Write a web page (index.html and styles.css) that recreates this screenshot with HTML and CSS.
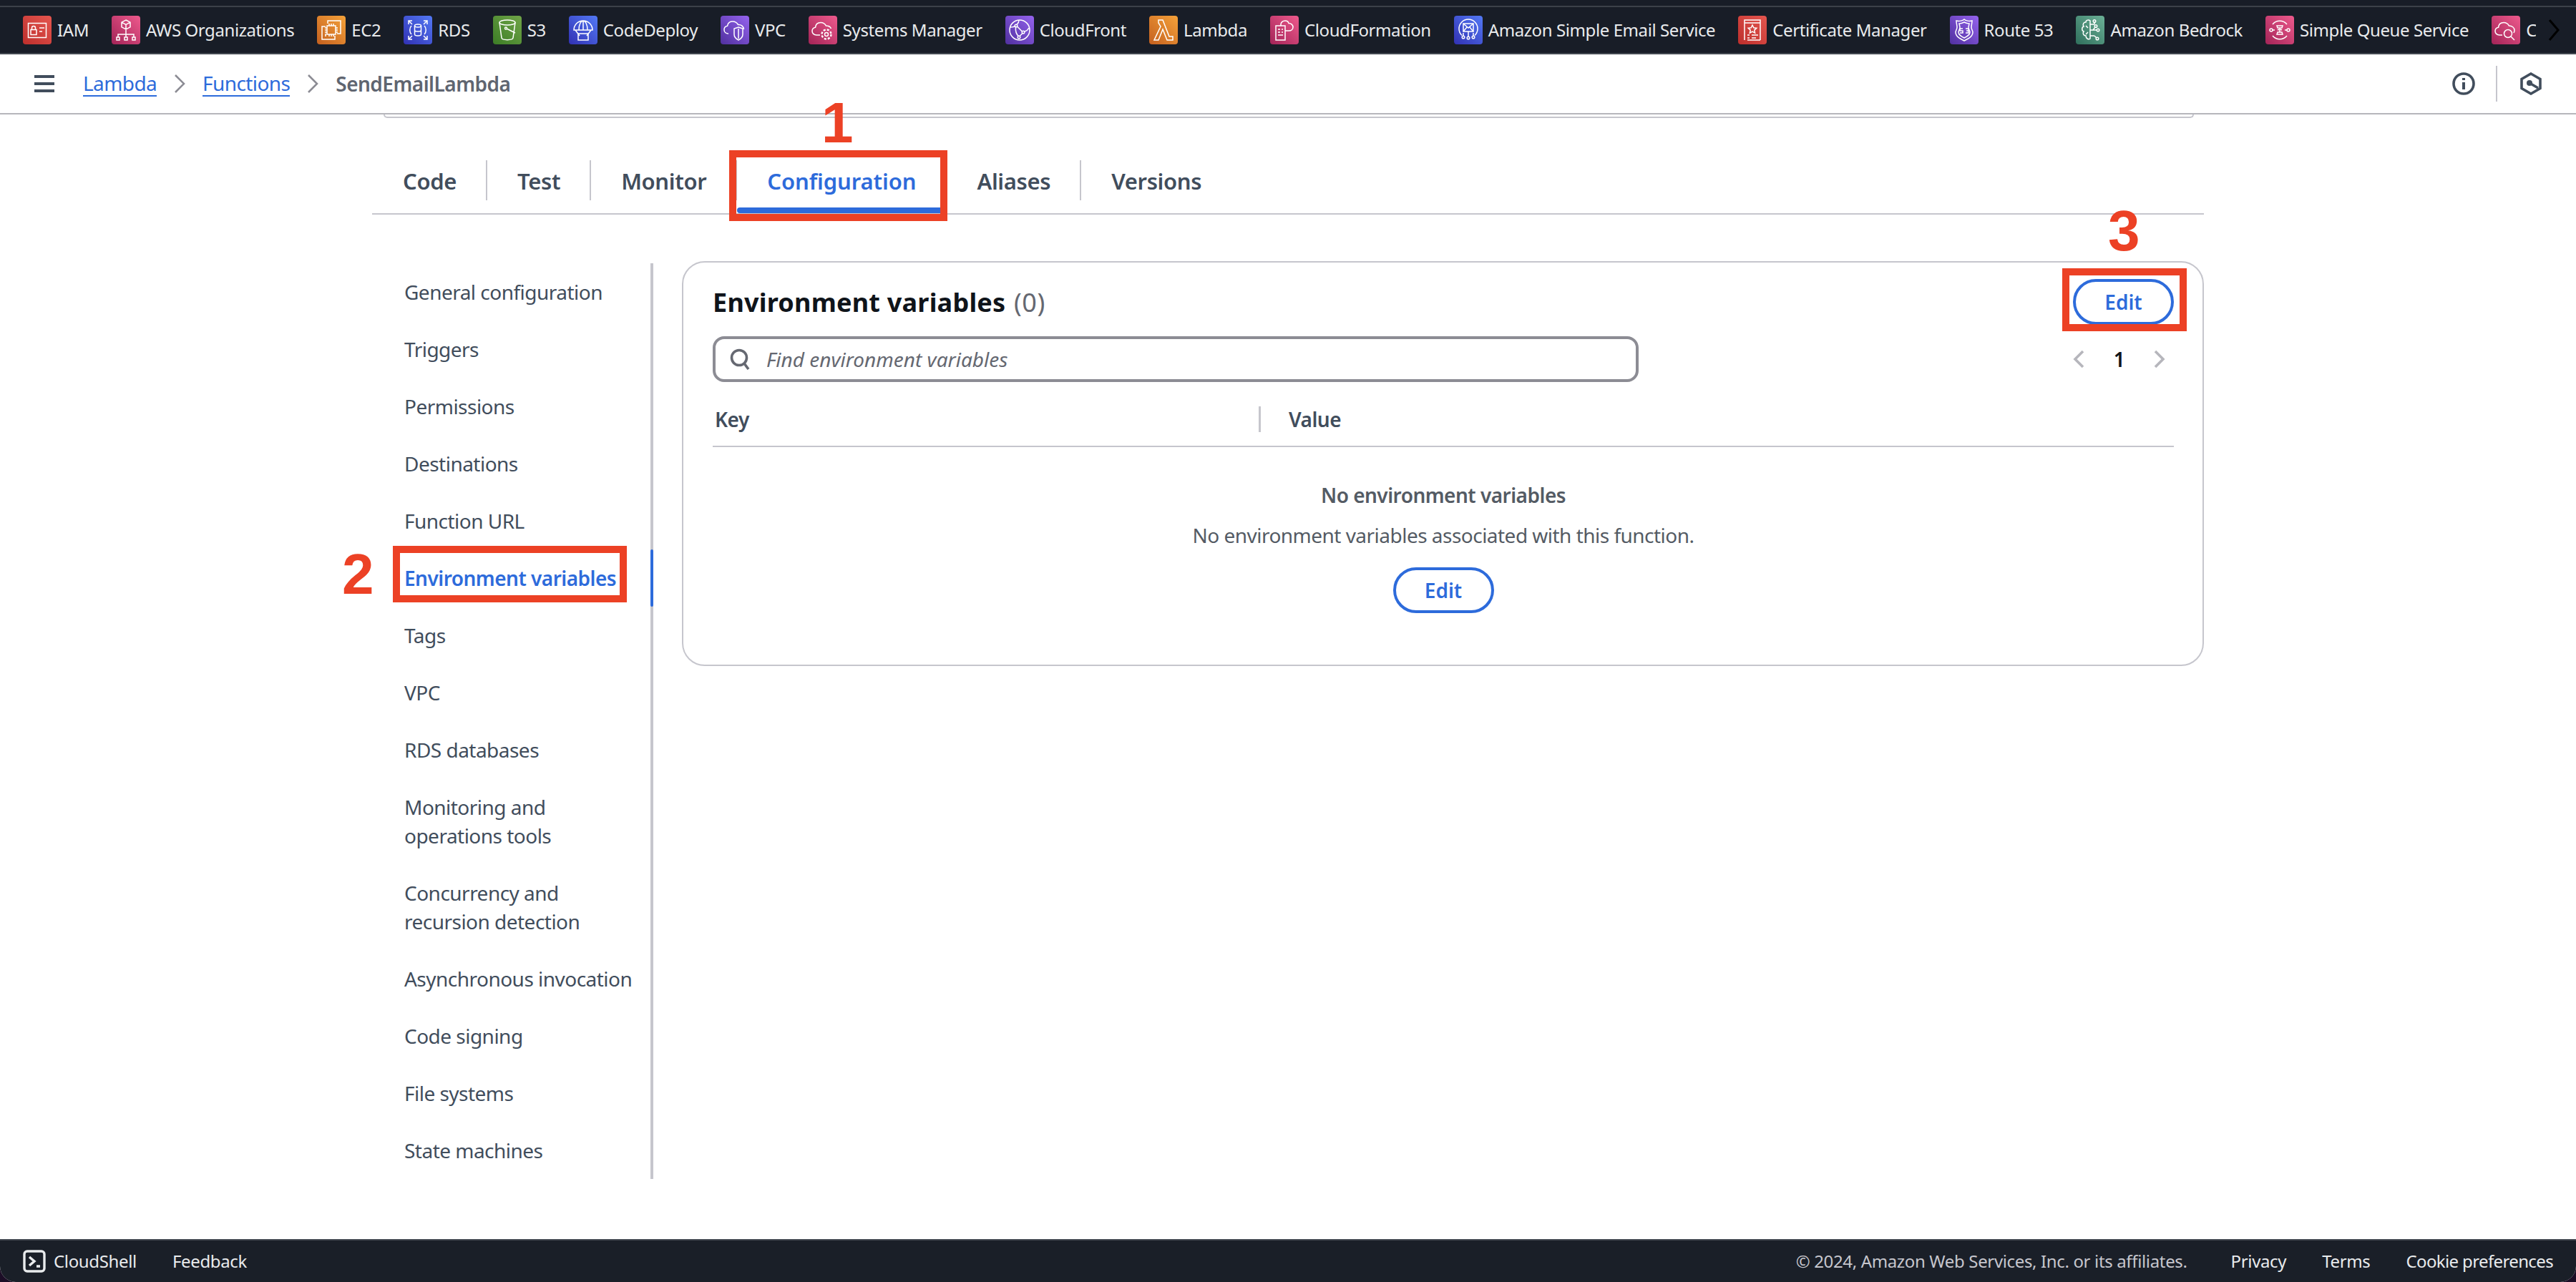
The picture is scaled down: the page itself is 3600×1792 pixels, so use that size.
FILE: index.html
```html
<!DOCTYPE html>
<html lang="en">
<head>
<meta charset="utf-8">
<title>SendEmailLambda - Lambda</title>
<link rel="stylesheet" href="styles.css">
</head>
<body>
<svg class="defs" width="0" height="0" aria-hidden="true">
  <symbol id="i-iam" viewBox="0 0 40 40"><rect x="7.5" y="10.5" width="25" height="20"/><rect x="11" y="19.5" width="8" height="7"/><path d="M12.5 19.5v-2.5a2.5 2.5 0 0 1 5 0v2.500M23 17h7M23 22h4"/></symbol>
  <symbol id="i-org" viewBox="0 0 40 40"><path d="M20 6l6 3.200v6.600l-6 3.200-6-3.200V9.200zM14 9.200l6 3.200 6-3.200M20 12.400V19M20 19v7M9 30v-4h22v4M20 26v4"/><rect x="7" y="30" width="4" height="4"/><rect x="18" y="30" width="4" height="4"/><rect x="29" y="30" width="4" height="4"/></symbol>
  <symbol id="i-ec2" viewBox="0 0 40 40"><path d="M15 11V7h18v18h-5M12 29v-4M12 15H7v18h18v-5"/><rect x="14" y="14" width="12" height="12"/><path d="M17 11v3M20 11v3M23 11v3M17 26v3M20 26v3M23 26v3M11 17h3M11 20h3M11 23h3M26 17h3M26 20h3M26 23h3"/></symbol>
  <symbol id="i-rds" viewBox="0 0 40 40"><ellipse cx="20" cy="14" rx="4.500" ry="2"/><path d="M15.500 14v12c0 2.600 9 2.600 9 0V14M15.500 20c0 2.600 9 2.600 9 0M7 12V7h5M33 12V7h-5M7 28v5h5M33 28v5h-5M7 7l5 5M33 7l-5 5M7 33l5-5M33 33l-5-5M11 14c-3 3-3 9 0 12M29 14c3 3 3 9 0 12"/></symbol>
  <symbol id="i-s3" viewBox="0 0 40 40"><ellipse cx="20" cy="9.500" rx="11" ry="3.500"/><path d="M9 9.500l3 21.500c.5 3.500 15.500 3.500 16 0l3-21.500M19 18l12 6"/><circle cx="18" cy="17.500" r="1.500"/></symbol>
  <symbol id="i-deploy" viewBox="0 0 40 40"><path d="M7 20a13 13 0 0 1 26 0zM14 20c0-8 3-13 6-13s6 5 6 13M20 7v13M9 20l6 8M31 20l-6 8"/><rect x="13" y="25" width="14" height="9"/></symbol>
  <symbol id="i-vpc" viewBox="0 0 40 40"><path d="M11 25c-3.500 0-6-2.200-6-5.500 0-2.800 2-4.800 4.500-5.200C10 10.500 13 8 17 8c3.500 0 6 2 7.500 4.500 4-.5 7.500 2 8 6.500"/><path d="M25 16l6 2v8c0 4-3 6.500-6 8-3-1.500-6-4-6-8v-8zM25 18v14"/></symbol>
  <symbol id="i-ssm" viewBox="0 0 40 40"><path d="M16 27h-5c-3.500 0-6-2.500-6-5.500 0-2.800 2-4.800 4.500-5.200C10 12 13 9.500 17 9.500c3.500 0 6 2 7.500 4.500 3.500 0 6 1.500 7 4"/><circle cx="25" cy="26" r="2.500"/><circle cx="25" cy="26" r="6.500" stroke-dasharray="3 2.100" stroke-width="2.400"/></symbol>
  <symbol id="i-cf" viewBox="0 0 40 40"><circle cx="20" cy="20" r="14"/><circle cx="15" cy="14" r="1.800"/><circle cx="25" cy="23" r="1.800"/><circle cx="19" cy="30" r="1.800"/><path d="M16.500 15l7 7M24 24.500l-4 4M14.500 16c-.5 5 1 10 4 12.500M7 16c4 0 6-1 7-2M16 12.500c2-2 3-5 3-6.500M27 22c3-1 5-3 6-5"/></symbol>
  <symbol id="i-lambda" viewBox="0 0 40 40"><path d="M13 6h6l9 23h5v5h-8l-6-15-6 15H7l9-19-3-5z"/></symbol>
  <symbol id="i-cfn" viewBox="0 0 40 40"><rect x="8" y="14" width="13" height="20"/><path d="M11 19h3M11 23h3M11 27h7M16 19h2M16 23h2M15 14v-2c0-3 3-5 6-5 2.500 0 4.500 1.500 5 3.500 3.500 0 6 2.500 6 5.500s-2.500 5-6 5h-5"/></symbol>
  <symbol id="i-ses" viewBox="0 0 40 40"><path d="M11 27.500a13 13 0 1 1 18 0"/><rect x="13" y="11" width="14" height="11"/><path d="M13 11l7 6 7-6M13 22l5-6M27 22l-5-6M20 22v7M13 24v4M27 24v4"/><circle cx="13" cy="30" r="1.800"/><circle cx="20" cy="31" r="1.800"/><circle cx="27" cy="30" r="1.800"/></symbol>
  <symbol id="i-acm" viewBox="0 0 40 40"><path d="M9 34V6h22v28M9 10h22M13 34h18"/><path d="M20 13l1.800 3.800 4 .5-3 2.800.8 4-3.600-2-3.600 2 .8-4-3-2.800 4-.5z"/><path d="M13 27h3M19 27h9M13 31h3M19 31h6"/></symbol>
  <symbol id="i-r53" viewBox="0 0 40 40"><path d="M20 5c2 2 7 3 11 2 0 4-1 6-1 9s2 5 2 7c0 6-6 9-12 12-6-3-12-6-12-12 0-2 2-4 2-7s-1-5-1-9c4 1 9 0 11-2z"/><path d="M20 9c2 1 4 2 7 2l-1 5c0 3 2 5 2 7 0 4-4 6-8 8-4-2-8-4-8-8 0-2 2-4 2-7l-1-5c3 0 5-1 7-2z"/><path d="M18 18h-4v3h4v3h-4M22 18h4v6h-4M23 21h3"/></symbol>
  <symbol id="i-br" viewBox="0 0 40 40"><path d="M20 7c-2-2-6-1-6 2-3 0-5 3-3 6-3 1-3 6 0 7-2 3 0 6 3 6 0 4 4 6 6 4zM20 12h6M20 20h4M20 28h6M26 12v-3M24 20l3-4M26 28l3 3"/><circle cx="26" cy="7.500" r="1.800"/><circle cx="28" cy="14.500" r="1.800"/><circle cx="31" cy="20" r="1.800"/><path d="M24 20h5"/><circle cx="30" cy="32" r="1.800"/><path d="M14 14l3 3M14 26l3-3"/></symbol>
  <symbol id="i-sqs" viewBox="0 0 40 40"><path d="M10 12a13 13 0 0 1 20 0M10 28a13 13 0 0 0 20 0"/><circle cx="8" cy="20" r="2"/><circle cx="32" cy="20" r="2"/><path d="M16 14h8l-1 3h-6zM16 26h8l-1-3h-6zM20 17v6M13 20h-3M27 20h3M17 20l2-1M23 20l-2-1"/></symbol>
  <symbol id="i-cw" viewBox="0 0 40 40"><path d="M15 27h-4c-3.500 0-6-2.500-6-5.500 0-2.800 2-4.800 4.500-5.200C10 12 13 9.500 17 9.500c3.500 0 6 2 7.500 4.500 4 0 7.500 2.500 7.500 6.500 0 1.500-.5 2.500-1 3.500"/><circle cx="23" cy="25" r="5.500"/><path d="M27 29l5 5"/></symbol>
</svg>

<div class="page">
  <header class="topbar">
    <div class="topbar-row">
      <nav class="services">
        <a class="svc"><span class="ico red"><svg><use href="#i-iam"/></svg></span>IAM</a>
        <a class="svc"><span class="ico pink"><svg><use href="#i-org"/></svg></span>AWS Organizations</a>
        <a class="svc"><span class="ico orange"><svg><use href="#i-ec2"/></svg></span>EC2</a>
        <a class="svc"><span class="ico blue"><svg><use href="#i-rds"/></svg></span>RDS</a>
        <a class="svc"><span class="ico green"><svg><use href="#i-s3"/></svg></span>S3</a>
        <a class="svc"><span class="ico blue"><svg><use href="#i-deploy"/></svg></span>CodeDeploy</a>
        <a class="svc"><span class="ico purple"><svg><use href="#i-vpc"/></svg></span>VPC</a>
        <a class="svc"><span class="ico pink"><svg><use href="#i-ssm"/></svg></span>Systems Manager</a>
        <a class="svc"><span class="ico purple"><svg><use href="#i-cf"/></svg></span>CloudFront</a>
        <a class="svc"><span class="ico orange"><svg><use href="#i-lambda"/></svg></span>Lambda</a>
        <a class="svc"><span class="ico pink"><svg><use href="#i-cfn"/></svg></span>CloudFormation</a>
        <a class="svc"><span class="ico blue"><svg><use href="#i-ses"/></svg></span>Amazon Simple Email Service</a>
        <a class="svc"><span class="ico red"><svg><use href="#i-acm"/></svg></span>Certificate Manager</a>
        <a class="svc"><span class="ico purple"><svg><use href="#i-r53"/></svg></span>Route 53</a>
        <a class="svc"><span class="ico teal"><svg><use href="#i-br"/></svg></span>Amazon Bedrock</a>
        <a class="svc"><span class="ico pink"><svg><use href="#i-sqs"/></svg></span>Simple Queue Service</a>
        <a class="svc"><span class="ico pink"><svg><use href="#i-cw"/></svg></span>C</a>
      </nav>
      <svg class="more" viewBox="0 0 16 32"><path d="M2 2l12 14L2 30"/></svg>
    </div>
  </header>

  <div class="crumbbar">
    <span class="burger"><i></i><i></i><i></i></span>
    <a class="crumb">Lambda</a>
    <svg class="sep" viewBox="0 0 16 26"><path d="M2 1l12 12L2 25"/></svg>
    <a class="crumb">Functions</a>
    <svg class="sep" viewBox="0 0 16 26"><path d="M2 1l12 12L2 25"/></svg>
    <span class="crumb-current">SendEmailLambda</span>
    <div class="crumb-tools">
      <svg class="tool" viewBox="0 0 32 32"><circle cx="16" cy="16" r="14"/><path class="tool-i" d="M16 14v10M16 8v3"/></svg>
      <span class="tool-div"></span>
      <svg class="tool" viewBox="0 0 32 32"><path d="M16 2l13 7.500v13L16 30 3 22.500v-13z"/><circle class="tool-dot" cx="14" cy="15" r="4"/><path d="M14 15l12 7"/></svg>
    </div>
  </div>

  <main class="main">
    <div class="prev-card"></div>

    <div class="tabs">
      <a class="tab">Code</a>
      <a class="tab">Test</a>
      <a class="tab">Monitor</a>
      <a class="tab active">Configuration</a>
      <a class="tab">Aliases</a>
      <a class="tab last">Versions</a>
    </div>

    <div class="config">
      <ul class="side">
        <li>General configuration</li>
        <li>Triggers</li>
        <li>Permissions</li>
        <li>Destinations</li>
        <li>Function URL</li>
        <li class="current">Environment variables</li>
        <li>Tags</li>
        <li>VPC</li>
        <li>RDS databases</li>
        <li>Monitoring and<br>operations tools</li>
        <li>Concurrency and<br>recursion detection</li>
        <li>Asynchronous invocation</li>
        <li>Code signing</li>
        <li>File systems</li>
        <li>State machines</li>
      </ul>

      <section class="card">
        <div class="card-head">
          <h2 class="card-title">Environment variables <span class="count">(0)</span></h2>
          <button class="btn">Edit</button>
        </div>
        <div class="filter-row">
          <div class="search">
            <svg class="search-ico" viewBox="0 0 30 30"><circle cx="13" cy="13" r="10.500"/><path d="M20 21l6 8"/></svg>
            <span class="placeholder">Find environment variables</span>
          </div>
          <div class="pager">
            <svg class="pg-chev" viewBox="0 0 16 26"><path d="M14 2L3 13l11 11"/></svg>
            <span class="pg-num">1</span>
            <svg class="pg-chev" viewBox="0 0 16 26"><path d="M2 2l11 11L2 24"/></svg>
          </div>
        </div>
        <div class="table-head">
          <div class="th th-key">Key</div>
          <div class="th th-val">Value</div>
        </div>
        <div class="empty">
          <div class="empty-title">No environment variables</div>
          <div class="empty-sub">No environment variables associated with this function.</div>
          <button class="btn">Edit</button>
        </div>
      </section>
    </div>
  </main>

  <footer class="footer">
    <a class="foot-shell">
      <svg class="shell-ico" viewBox="0 0 32 32"><rect x="2" y="2" width="28" height="28" rx="4"/><path d="M9 10l7 6-7 6M19 23h5"/></svg>
      CloudShell
    </a>
    <a class="foot-link feedback">Feedback</a>
    <span class="copyright">© 2024, Amazon Web Services, Inc. or its affiliates.</span>
    <a class="foot-link">Privacy</a>
    <a class="foot-link">Terms</a>
    <a class="foot-link cookie">Cookie preferences</a>
  </footer>

  <div class="mark mark-tab"></div>
  <div class="mark mark-nav"></div>
  <div class="mark mark-edit"></div>
  <span class="step step-1">1</span>
  <span class="step step-2">2</span>
  <span class="step step-3">3</span>
</div>
</body>
</html>
```

FILE: styles.css
```css
* { box-sizing: border-box; }
html, body { margin: 0; padding: 0; background: #1c0d26; }
body { font-family: "Noto Sans", "Open Sans", sans-serif; font-size: 28px; line-height: 40px; color: #414d5c; letter-spacing: -0.52px; }
.defs { position: absolute; }
a { color: inherit; text-decoration: none; }

.page { position: relative; width: 3600px; height: 1792px; display: flex; flex-direction: column; overflow: hidden; background: #fff; border-radius: 0 0 22px 22px; }

/* top service bar */
.topbar { height: 76px; flex: none; padding-top: 8px; background: #181d27; border-bottom: 2px solid #434851; }
.topbar-row { height: 66px; border-top: 2px solid #3c4149; display: flex; align-items: center; }
.services { flex: none; width: 3544px; padding-left: 32px; display: flex; gap: 32px; align-items: center; overflow: hidden; }
.svc { flex: none; display: flex; align-items: center; gap: 8px; color: #e9ebed; font-size: 24px; letter-spacing: -0.41px; line-height: 40px; white-space: nowrap; }
.ico { flex: none; width: 40px; height: 40px; border-radius: 4px; display: block; }
.ico svg { display: block; width: 40px; height: 40px; fill: none; stroke: #fff; stroke-width: 1.5; }
.red { background: linear-gradient(45deg, #bd2f2c, #e5564f); }
.pink { background: linear-gradient(45deg, #a32457, #ee5a8d); }
.orange { background: linear-gradient(45deg, #c4601f, #f5a23a); }
.blue { background: linear-gradient(45deg, #3131b3, #5379f5); }
.green { background: linear-gradient(45deg, #3c7d26, #70a548); }
.purple { background: linear-gradient(45deg, #50309f, #9563ee); }
.teal { background: linear-gradient(45deg, #2f6f5c, #6bb096); }
.more { width: 16px; height: 32px; margin-left: 17px; fill: none; stroke: #000; stroke-width: 3; flex: none; }

/* breadcrumbs */
.crumbbar { height: 84px; flex: none; display: flex; align-items: center; padding-left: 48px; border-bottom: 2px solid #b6b6bc; background: #fff; }
.burger { width: 28px; display: flex; flex-direction: column; gap: 6px; margin-right: 40px; }
.burger i { display: block; height: 4px; background: #414d5c; }
.crumb { color: #2d6bdb; font-size: 28px; letter-spacing: -0.6px; border-bottom: 2px solid #2d6bdb; line-height: 34px; }
.sep { width: 16px; height: 26px; margin: 0 24px; fill: none; stroke: #8c8c94; stroke-width: 2.6; flex: none; }
.crumb-current { color: #5f6570; font-size: 28px; font-weight: 600; }
.crumb-tools { margin-left: auto; display: flex; align-items: center; padding-right: 47px; }
.tool { width: 32px; height: 32px; fill: none; stroke: #414d5c; stroke-width: 3.6; flex: none; }
.tool-i { stroke-width: 4; }
.tool-dot { fill: #414d5c; stroke: none; }
.tool-div { width: 2px; height: 50px; background: #c6c6cd; margin: 0 31px 0 29px; }

/* main */
.main { flex: 1; min-height: 0; background: #fff; overflow: hidden; }
.prev-card { height: 5px; margin: 0 534px 0 536px; border: 2px solid #c6c6cd; border-top: 0; border-radius: 0 0 24px 24px; }
.tabs { margin: 59px 520px 0 520px; padding: 0 0 18px 1px; display: flex; border-bottom: 2px solid #c6c6cd; }
.tab { position: relative; height: 56px; line-height: 58px; padding: 0 41px 0 42px; font-size: 31px; letter-spacing: -0.35px; font-weight: 600; color: #414d5c; border-right: 2px solid #c6c6cd; white-space: nowrap; }
.tab.last { border-right: 0; }
.tab.active { color: #2d6bdb; letter-spacing: -0.1px; }
.tab.active::after { content: ""; position: absolute; left: 0; right: 0; bottom: -18px; height: 8px; border-radius: 4px; background: #2d6bdb; }

.config { display: flex; margin: 65px 520px 0 520px; align-items: flex-start; }
.side { list-style: none; margin: 3px 40px 0 0; padding: 0 0 0 45px; width: 393px; flex: none; border-right: 4px solid #c6c6cd; }
.side li { position: relative; padding: 20px 0; line-height: 40px; font-size: 28px; color: #414d5c; white-space: nowrap; }
.side li.current { color: #2d6bdb; font-weight: 600; }
.side li.current::after { content: ""; position: absolute; right: -4px; top: 0; bottom: 0; width: 4px; background: #2d6bdb; border-radius: 2px; }

.card { flex: 1; min-width: 0; padding: 23px 40px 72px 41px; border: 2px solid #c6c6cd; border-radius: 32px; background: #fff; }
.card-head { display: flex; justify-content: space-between; align-items: center; height: 64px; }
.card-title { margin: 0; padding-top: 2px; font-size: 36px; line-height: 48px; font-weight: 700; letter-spacing: 0.22px; color: #0f141a; }
.count { margin-left: 2px; font-weight: 400; letter-spacing: 0.6px; color: #656871; }
.btn { display: block; width: 141px; height: 64px; padding: 0; border: 4px solid #2d6bdb; border-radius: 32px; background: #fff; color: #2d6bdb; font-family: inherit; font-size: 28px; font-weight: 600; line-height: 40px; }

.filter-row { margin-top: 16px; display: flex; justify-content: space-between; align-items: center; }
.search { width: 1294px; height: 64px; display: flex; align-items: center; border: 4px solid #8c8c94; border-radius: 16px; padding-left: 20px; background: #fff; }
.search-ico { width: 30px; height: 30px; fill: none; stroke: #656871; stroke-width: 3.6; flex: none; }
.placeholder { margin-left: 21px; font-style: italic; color: #656871; font-size: 28px; letter-spacing: 0; }
.pager { width: 141px; display: flex; align-items: center; justify-content: space-between; padding-right: 12px; }
.pg-chev { width: 16px; height: 26px; fill: none; stroke: #b6b6bc; stroke-width: 3.6; flex: none; }
.pg-num { font-size: 28px; font-weight: 600; color: #0f141a; }

.table-head { margin-top: 34px; display: flex; border-bottom: 2px solid #c6c6cd; padding-bottom: 19px; }
.th { font-weight: 600; font-size: 28px; line-height: 36px; color: #414d5c; }
.th-key { width: 766px; padding-left: 3px; border-right: 3px solid #c6c6cd; }
.th-val { padding-left: 39px; }

.empty { display: flex; flex-direction: column; align-items: center; text-align: center; padding-top: 47px; color: #545b64; }
.empty-title { font-weight: 600; line-height: 40px; }
.empty-sub { margin-top: 16px; line-height: 40px; }
.empty .btn { margin-top: 25px; }

/* footer */
.footer { height: 60px; flex: none; display: flex; align-items: center; padding: 0 32px; background: #1a1f28; border-top: 2px solid #434851; color: #e9ebed; font-size: 24px; letter-spacing: -0.35px; line-height: 36px; }
.foot-shell { display: flex; align-items: center; gap: 11px; }
.shell-ico { width: 32px; height: 32px; fill: none; stroke: #e9ebed; stroke-width: 3.4; flex: none; }
.feedback { margin-left: 50px; margin-right: auto; }
.copyright { color: #c6c6cd; margin-right: 61px; }
.foot-link + .foot-link { margin-left: 50px; }
.copyright + .foot-link { margin-left: 0; }
.cookie { letter-spacing: -0.63px; }

/* tutorial annotations drawn over the screenshot */
.mark { position: absolute; border: 10px solid #ec4125; }
.mark-tab { left: 1019px; top: 210px; width: 305px; height: 99px; }
.mark-nav { left: 549px; top: 763px; width: 327px; height: 79px; }
.mark-edit { left: 2882px; top: 375px; width: 174px; height: 88px; }
.step { position: absolute; font-family: "Liberation Sans", Arial, sans-serif; font-weight: 700; font-size: 80px; line-height: 80px; letter-spacing: 0; color: #ec4125; }
.step-1 { left: 1148px; top: 132px; }
.step-2 { left: 478px; top: 763px; }
.step-3 { left: 2946px; top: 283px; }
```
